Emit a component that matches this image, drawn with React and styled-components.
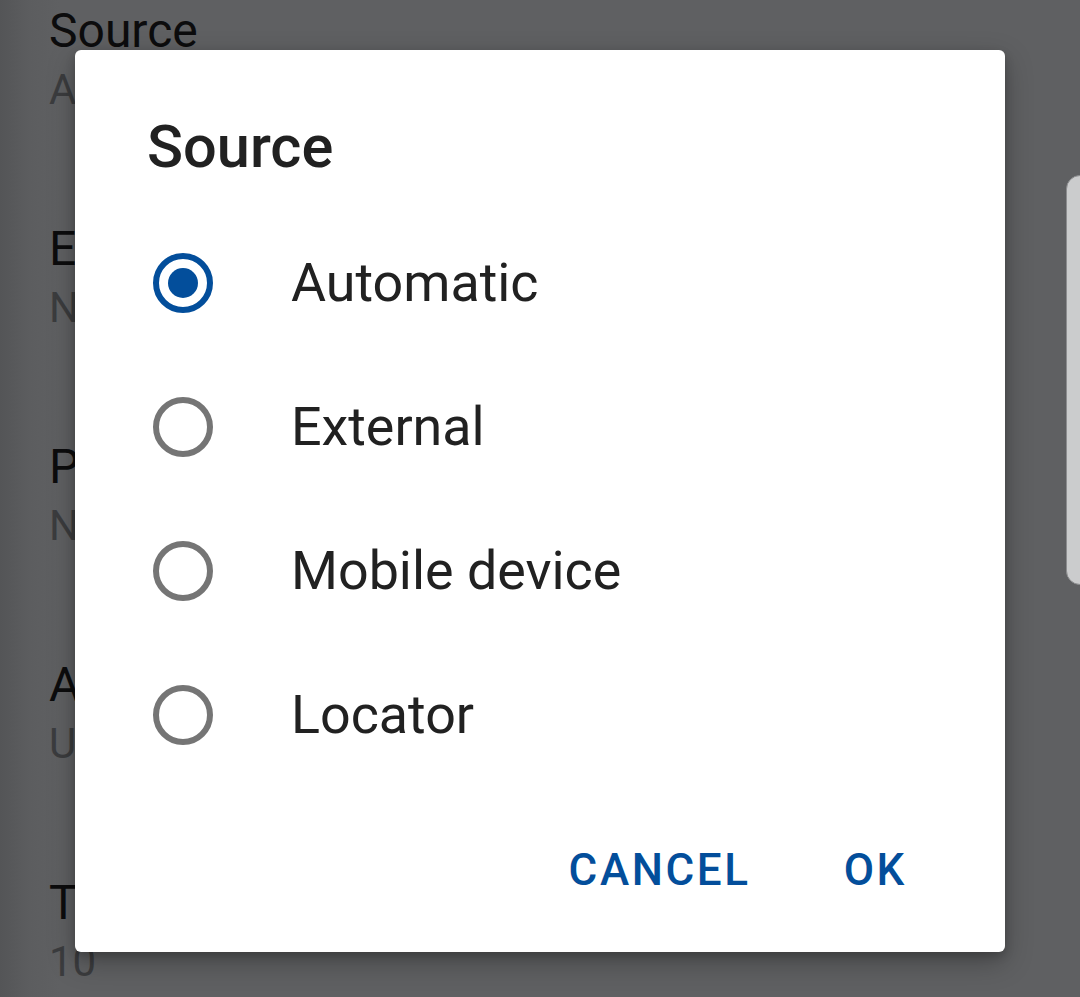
import React, { useState } from "react";
import styled, { createGlobalStyle } from "styled-components";

const Global = createGlobalStyle`
  html, body { margin: 0; padding: 0; }
  body {
    width: 1080px;
    height: 997px;
    overflow: hidden;
    font-family: Roboto, "Noto Sans", "Liberation Sans", sans-serif;
    background: #5f6062;
  }
`;

const Screen = styled.div`
  position: relative;
  width: 1080px;
  height: 997px;
  overflow: hidden;
  background: linear-gradient(to right, #545557 0px, #5c5d5f 30px, #5f6062 60px);
`;

const SettingsList = styled.div`
  display: flex;
  flex-direction: column;
  padding: 3px 0 0 49px;
`;

const SettingRow = styled.div`
  display: flex;
  flex-direction: column;
  gap: 6px;
  height: 218px;
`;

const SettingTitle = styled.div`
  font-size: 48px;
  line-height: 56px;
  color: #0c0c0d;
`;

const SettingValue = styled.div`
  font-size: 42px;
  line-height: 50px;
  color: #3b3c3e;
`;

const SideTab = styled.div`
  position: absolute;
  left: 1066px;
  top: 175px;
  width: 40px;
  height: 410px;
  background: #cbcccd;
  border: 1.5px solid #8c8d8f;
  border-radius: 14px;
  box-sizing: border-box;
`;

const Scrim = styled.div`
  position: absolute;
  inset: 0;
  display: flex;
  justify-content: center;
  align-items: flex-start;
  padding-top: 50px;
`;

const Dialog = styled.div`
  width: 930px;
  height: 902px;
  box-sizing: border-box;
  background: #ffffff;
  border-radius: 6px;
  box-shadow: 0 10px 28px rgba(0, 0, 0, 0.28), 0 4px 10px rgba(0, 0, 0, 0.18);
  padding: 62px 0 0 0;
  display: flex;
  flex-direction: column;
`;

const DialogTitle = styled.h2`
  margin: 0 0 29px 72px;
  font-size: 59.5px;
  line-height: 70px;
  font-weight: 500;
  color: #212121;
`;

const OptionList = styled.div`
  display: flex;
  flex-direction: column;
`;

const OptionRow = styled.label`
  display: flex;
  align-items: center;
  height: 144px;
  padding-left: 78px;
  gap: 78px;
  cursor: pointer;
`;

const RadioCircle = styled.span`
  width: 60px;
  height: 60px;
  box-sizing: border-box;
  border-radius: 50%;
  border: 6px solid ${(p) => (p.$checked ? "#034e9b" : "#757575")};
  display: flex;
  align-items: center;
  justify-content: center;
  flex-shrink: 0;
  &::after {
    content: "";
    width: 30px;
    height: 30px;
    border-radius: 50%;
    background: #034e9b;
    display: ${(p) => (p.$checked ? "block" : "none")};
  }
`;

const OptionText = styled.span`
  font-size: 53.8px;
  line-height: 66px;
  color: #212121;
`;

const Actions = styled.div`
  display: flex;
  justify-content: flex-end;
  gap: 93px;
  margin-top: 57px;
  padding-right: 98px;
`;

const TextButton = styled.button`
  background: none;
  border: none;
  padding: 0;
  font-family: inherit;
  font-size: 44px;
  line-height: 52px;
  font-weight: 500;
  letter-spacing: 2.6px;
  color: #034e9b;
  cursor: pointer;
`;

const settings = [
  { title: "Source", value: "Automatic" },
  { title: "Engine", value: "None" },
  { title: "Position", value: "None" },
  { title: "Accuracy", value: "Unknown" },
  { title: "Timeout", value: "10" },
];

const options = ["Automatic", "External", "Mobile device", "Locator"];

export default function App() {
  const [selected, setSelected] = useState("Automatic");
  return (
    <Screen>
      <Global />
      <SettingsList>
        {settings.map((s) => (
          <SettingRow key={s.title}>
            <SettingTitle>{s.title}</SettingTitle>
            <SettingValue>{s.value}</SettingValue>
          </SettingRow>
        ))}
      </SettingsList>
      <SideTab />
      <Scrim>
        <Dialog>
          <DialogTitle>Source</DialogTitle>
          <OptionList>
            {options.map((o) => (
              <OptionRow key={o} onClick={() => setSelected(o)}>
                <RadioCircle $checked={selected === o} />
                <OptionText>{o}</OptionText>
              </OptionRow>
            ))}
          </OptionList>
          <Actions>
            <TextButton>CANCEL</TextButton>
            <TextButton>OK</TextButton>
          </Actions>
        </Dialog>
      </Scrim>
    </Screen>
  );
}
